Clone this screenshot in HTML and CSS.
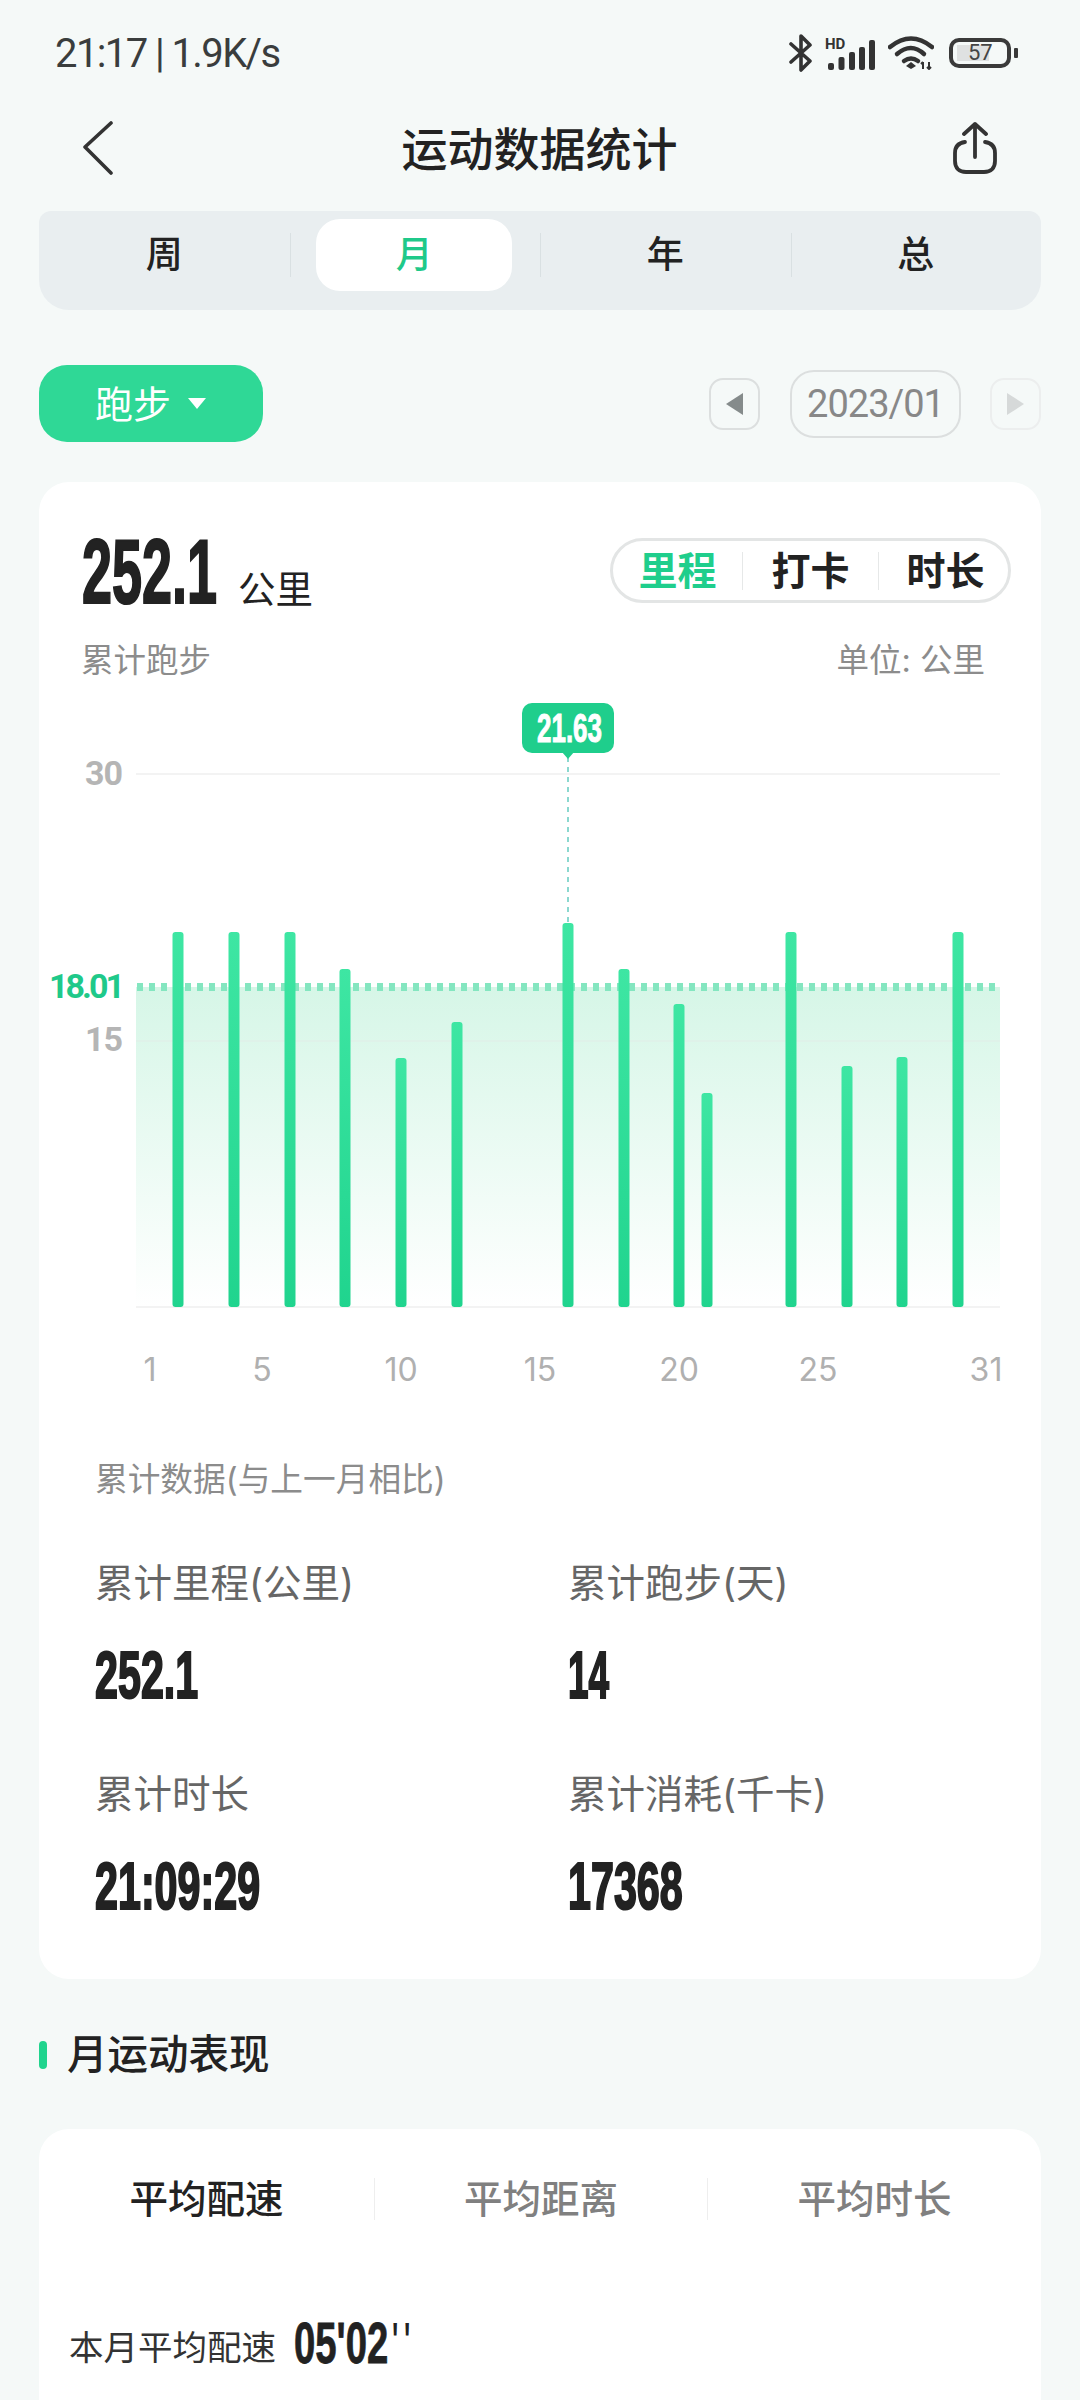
FILE: index.html
```html
<!DOCTYPE html>
<html lang="zh-CN">
<head>
  <meta charset="UTF-8">
  <meta name="viewport" content="width=device-width, initial-scale=1.0">
  <title>运动数据统计</title>
  <link rel="stylesheet" href="styles.css">
</head>
<body>
  <div class="status-bar">
    <span class="status-time">21:17 | 1.9K/s</span>
    <div class="status-icons">
      <svg class="ic-bt" viewBox="0 0 24 38"><path d="M2 10 L21 27 L12 36 V2 L21 11 L2 28"/></svg>
      <div class="ic-signal">
        <span class="hd">HD</span>
        <svg viewBox="0 0 47 30"><rect x="0" y="23" width="6" height="7" rx="2"/><rect x="10.500" y="17" width="6" height="13" rx="2"/><rect x="21" y="12" width="6" height="18" rx="2"/><rect x="31" y="7" width="6" height="23" rx="2"/><rect x="41" y="0" width="6" height="30" rx="2"/></svg>
      </div>
      <svg class="ic-wifi" viewBox="0 0 46 34">
        <path class="arc" d="M2 11 Q23 -6 44 11"/>
        <path class="arc" d="M9 18 Q23 6 36 18"/>
        <path class="arc" d="M16 25 Q23 20 30 25"/>
        <path class="solid" d="M23 26 L28 30 L23 33 L18 30 Z"/>
        <path class="thin" d="M35 33 V26 M33 28 L35 26 M41 26 V33 M39 31 L41 33 L43 31"/>
      </svg>
      <div class="battery">
        <div class="battery-body">57</div>
        <div class="battery-nub"></div>
      </div>
    </div>
  </div>

  <div class="nav-bar">
    <svg class="ic-back" viewBox="0 0 32 54"><path d="M29 2 L3 26 L29 52"/></svg>
    <h1>运动数据统计</h1>
    <svg class="ic-share" viewBox="0 0 44 52">
      <path d="M12 20 C5 21 2 25 2 31 V39 C2 46 6 50 13 50 H31 C38 50 42 46 42 39 V31 C42 25 39 21 32 20"/>
      <path d="M22 2 V35 M11 12 L22 2 L33 12"/>
    </svg>
  </div>

  <div class="period-tabs">
    <div class="period-tab"><span>周</span></div>
    <div class="period-tab active"><span>月</span></div>
    <div class="period-tab"><span>年</span></div>
    <div class="period-tab"><span>总</span></div>
  </div>

  <div class="filter-row">
    <div class="sport-btn"><span>跑步</span><i class="caret"></i></div>
    <div class="date-nav">
      <div class="date-arrow"><i class="tri-left"></i></div>
      <div class="date-label">2023/01</div>
      <div class="date-arrow disabled"><i class="tri-right"></i></div>
    </div>
  </div>

  <div class="card summary-card">
    <div class="summary-head">
      <div class="summary-total">
        <div class="total-num"><span class="num num-xl">252.1</span></div>
        <span class="total-unit">公里</span>
      </div>
      <div class="metric-switch">
        <span class="metric active">里程</span>
        <span class="metric">打卡</span>
        <span class="metric">时长</span>
      </div>
    </div>
    <div class="summary-sub">
      <span>累计跑步</span>
      <span>单位: 公里</span>
    </div>

    <svg class="chart" viewBox="40 690 1000 710">
      <defs>
        <linearGradient id="barFill" x1="0" y1="0" x2="0" y2="1">
          <stop offset="0" stop-color="#3ee6a3"/>
          <stop offset="1" stop-color="#20d48e"/>
        </linearGradient>
        <linearGradient id="areaFill" x1="0" y1="0" x2="0" y2="1">
          <stop offset="0" stop-color="#d6f6e7"/>
          <stop offset="1" stop-color="#ffffff"/>
        </linearGradient>
      </defs>

      <rect x="136" y="987" width="864" height="320" fill="url(#areaFill)"/>
      <line class="grid" x1="136" y1="774" x2="1000" y2="774"/>
      <line class="grid-mid" x1="136" y1="1041" x2="1000" y2="1041"/>
      <line class="grid" x1="136" y1="1307" x2="1000" y2="1307"/>
      <line class="avg" x1="137" y1="987" x2="1000" y2="987"/>
      <line class="pointer" x1="568" y1="757" x2="568" y2="923"/>

      <g fill="url(#barFill)">
        <rect x="172.500" y="932" width="11" height="375" rx="3"/>
        <rect x="228.500" y="932" width="11" height="375" rx="3"/>
        <rect x="284.500" y="932" width="11" height="375" rx="3"/>
        <rect x="339.500" y="969" width="11" height="338" rx="3"/>
        <rect x="395.500" y="1058" width="11" height="249" rx="3"/>
        <rect x="451.500" y="1022" width="11" height="285" rx="3"/>
        <rect x="562.500" y="923" width="11" height="384" rx="3"/>
        <rect x="618.500" y="969" width="11" height="338" rx="3"/>
        <rect x="673.500" y="1004" width="11" height="303" rx="3"/>
        <rect x="701.500" y="1093" width="11" height="214" rx="3"/>
        <rect x="785.500" y="932" width="11" height="375" rx="3"/>
        <rect x="841.500" y="1066" width="11" height="241" rx="3"/>
        <rect x="896.500" y="1057" width="11" height="250" rx="3"/>
        <rect x="952.500" y="932" width="11" height="375" rx="3"/>
      </g>

      <text class="y-label" x="122" y="785">30</text>
      <text class="y-label avg-label" x="122" y="998">18.01</text>
      <text class="y-label" x="122" y="1051">15</text>

      <text class="x-label" x="150" y="1381">1</text>
      <text class="x-label" x="262" y="1381">5</text>
      <text class="x-label" x="401" y="1381">10</text>
      <text class="x-label" x="540" y="1381">15</text>
      <text class="x-label" x="679" y="1381">20</text>
      <text class="x-label" x="818" y="1381">25</text>
      <text class="x-label" x="986" y="1381">31</text>

      <rect class="tip" x="522" y="703" width="92" height="50" rx="10"/>
      <path class="tip" d="M562 752 H574 L568 759 Z"/>
      <text class="tip-text" x="537" y="742" textLength="65" lengthAdjust="spacingAndGlyphs">21.63</text>
    </svg>

    <div class="stats-title">累计数据(与上一月相比)</div>
    <div class="stats-grid">
      <div class="stat">
        <div class="stat-label">累计里程(公里)</div>
        <div class="stat-value"><span class="num num-lg">252.1</span></div>
      </div>
      <div class="stat">
        <div class="stat-label">累计跑步(天)</div>
        <div class="stat-value"><span class="num num-lg num-tight">14</span></div>
      </div>
      <div class="stat">
        <div class="stat-label">累计时长</div>
        <div class="stat-value"><span class="num num-lg">21:09:29</span></div>
      </div>
      <div class="stat">
        <div class="stat-label">累计消耗(千卡)</div>
        <div class="stat-value"><span class="num num-lg">17368</span></div>
      </div>
    </div>
  </div>

  <div class="section-title"><i></i>月运动表现</div>

  <div class="card perf-card">
    <div class="perf-tabs">
      <div class="perf-tab active">平均配速</div>
      <div class="perf-tab">平均距离</div>
      <div class="perf-tab">平均时长</div>
    </div>
    <div class="perf-row">
      <span class="perf-label">本月平均配速</span>
      <span class="num num-md">05'02<span class="secs">''</span></span>
    </div>
  </div>
</body>
</html>
```

FILE: styles.css
```css
* {
  box-sizing: border-box;
}

html, body {
  margin: 0;
  padding: 0;
}

body {
  width: 1080px;
  height: 2400px;
  overflow: hidden;
  background: #f5f9f8;
  color: #222;
  font-family: "Inter", "Noto Sans CJK SC", "Noto Sans", sans-serif;
}

/* status bar */
.status-bar {
  height: 106px;
  padding: 0 62px 0 55px;
  display: flex;
  align-items: center;
  justify-content: space-between;
}

.status-time {
  font-family: "Roboto", sans-serif;
  font-size: 40px;
  letter-spacing: -1.600px;
  color: #3a3d3d;
}

.status-icons {
  display: flex;
  align-items: center;
}

.ic-bt {
  width: 24px;
  height: 38px;
  fill: none;
  stroke: #333;
  stroke-width: 3.600;
  stroke-linecap: round;
  stroke-linejoin: round;
}

.ic-signal {
  width: 47px;
  height: 30px;
  margin-left: 15px;
  position: relative;
  align-self: flex-end;
  margin-bottom: 2px;
}

.ic-signal svg {
  display: block;
  width: 47px;
  height: 30px;
  fill: #333;
}

.hd {
  position: absolute;
  left: -3px;
  top: -3px;
  font-family: "Roboto", sans-serif;
  font-size: 15px;
  line-height: 15px;
  font-weight: 700;
  color: #333;
}

.ic-wifi {
  width: 46px;
  height: 34px;
  margin-left: 13px;
}

.ic-wifi .arc {
  fill: none;
  stroke: #333;
  stroke-width: 4.500;
  stroke-linecap: round;
}

.ic-wifi .solid {
  fill: #333;
}

.ic-wifi .thin {
  fill: none;
  stroke: #333;
  stroke-width: 2;
}

.battery {
  display: flex;
  align-items: center;
  margin-left: 15px;
}

.battery-body {
  width: 62px;
  height: 30px;
  border: 4px solid #3a3a3a;
  border-radius: 10px;
  padding-left: 15px;
  background: linear-gradient(#dfe1e1, #dfe1e1) 4px 3px / 32px 16px no-repeat;
  font-family: "Roboto", sans-serif;
  font-size: 22px;
  line-height: 22px;
  color: #444;
}

.battery-nub {
  width: 4px;
  height: 10px;
  margin-left: 3px;
  background: #3a3a3a;
  border-radius: 1px;
}

/* title bar */
.nav-bar {
  height: 84px;
  padding: 0 83px 0 82px;
  display: flex;
  align-items: center;
  justify-content: space-between;
}

.nav-bar h1 {
  margin: 0 0 5px 12px;
  font-size: 46px;
  font-weight: 500;
  color: #222;
}

.ic-back {
  width: 32px;
  height: 54px;
  fill: none;
  stroke: #333;
  stroke-width: 3.600;
  stroke-linecap: round;
  stroke-linejoin: round;
}

.ic-share {
  width: 44px;
  height: 52px;
  fill: none;
  stroke: #333;
  stroke-width: 3.800;
  stroke-linecap: round;
  stroke-linejoin: round;
}

/* week / month / year tabs */
.period-tabs {
  height: 99px;
  margin: 21px 39px 0;
  padding-bottom: 19px;
  padding-top: 8px;
  display: grid;
  grid-template-columns: repeat(4, 1fr);
  background: #e9eef0;
  border-radius: 12px 12px 30px 30px;
}

.period-tab {
  display: flex;
  align-items: center;
  justify-content: center;
  font-size: 37px;
  font-weight: 500;
  color: #222;
  position: relative;
}

.period-tab span {
  padding-bottom: 6px;
}

.period-tab + .period-tab::before {
  content: "";
  position: absolute;
  left: 0;
  top: 14px;
  bottom: 14px;
  width: 1px;
  background: #d9e0e2;
}

.period-tab.active span {
  width: 196px;
  height: 72px;
  display: flex;
  align-items: center;
  justify-content: center;
  margin-left: -1px;
  background: #fff;
  border-radius: 24px;
  color: #1fc98a;
}

/* sport + date selector */
.filter-row {
  margin: 55px 39px 0;
  height: 77px;
  display: flex;
  align-items: center;
  justify-content: space-between;
}

.sport-btn {
  width: 224px;
  height: 77px;
  padding-left: 56px;
  display: flex;
  align-items: center;
  background: #2fd896;
  border-radius: 28px;
  color: #fff;
  font-size: 38px;
}

.sport-btn span {
  padding-bottom: 4px;
}

.caret {
  margin-left: 17px;
  border-top: 11px solid #fff;
  border-left: 9px solid transparent;
  border-right: 9px solid transparent;
}

.date-nav {
  display: flex;
  align-items: center;
}

.date-arrow {
  width: 51px;
  height: 52px;
  display: flex;
  align-items: center;
  justify-content: center;
  border: 2px solid #dcdfdf;
  border-radius: 14px;
}

.date-arrow.disabled {
  margin-left: 29px;
  border-color: #eceeee;
}

.tri-left {
  border-right: 17px solid #858b8b;
  border-top: 11px solid transparent;
  border-bottom: 11px solid transparent;
}

.tri-right {
  border-left: 17px solid #d6d9d9;
  border-top: 11px solid transparent;
  border-bottom: 11px solid transparent;
}

.date-label {
  width: 171px;
  height: 68px;
  margin-left: 30px;
  display: flex;
  align-items: center;
  justify-content: center;
  border: 2px solid #dcdfdf;
  border-radius: 24px;
  font-family: "Roboto", sans-serif;
  font-size: 38px;
  letter-spacing: -1px;
  color: #888;
}

/* cards */
.card {
  margin: 0 39px;
  background: #fff;
  border-radius: 30px;
}

.summary-card {
  margin-top: 40px;
  height: 1497px;
  padding-top: 56px;
}

.summary-head {
  height: 67px;
  padding: 0 30px 0 43px;
  display: flex;
  justify-content: space-between;
}

.summary-total {
  display: flex;
  align-items: flex-end;
}

.total-num {
  width: 156px;
  height: 67px;
  padding-top: 1px;
}

.total-unit {
  margin-bottom: -3px;
  font-size: 37.500px;
  line-height: 36px;
  color: #222;
}

/* squeezed figures: the app uses a condensed bold numeral face */
.num {
  display: inline-block;
  font-family: "Liberation Sans", sans-serif;
  font-weight: 700;
  color: #222;
  -webkit-text-stroke: 2.200px #222;
  transform-origin: 0 50%;
}

.num-xl {
  font-size: 90px;
  line-height: 67px;
  transform: scaleX(.6);
}

.num-lg {
  font-size: 66px;
  line-height: 60px;
  transform: scaleX(.625);
}

.num-tight {
  transform: scaleX(.56);
}

.num-md {
  font-size: 58px;
  line-height: 58px;
  -webkit-text-stroke: .800px #222;
  transform: scaleX(.66);
}

.secs {
  letter-spacing: 7px;
  margin-left: 5px;
  font-weight: 400;
  -webkit-text-stroke: 0;
}

.metric-switch {
  width: 401px;
  height: 65px;
  display: grid;
  grid-template-columns: 129px 136px 1fr;
  align-items: center;
  border: 3px solid #e3e5e5;
  border-radius: 33px;
  font-size: 39px;
  font-weight: 700;
  line-height: 38px;
  text-align: center;
}

.metric {
  color: #222;
}

.metric + .metric {
  border-left: 1px solid #e6e8e8;
}

.metric + .metric + .metric {
  padding-left: 4px;
}

.metric.active {
  color: #1fce8c;
}

.summary-sub {
  margin-top: 36px;
  padding: 0 56px 0 42px;
  display: flex;
  justify-content: space-between;
  font-size: 32.500px;
  line-height: 40px;
  color: #8c8c8c;
}

.chart {
  display: block;
  width: 1000px;
  height: 710px;
  margin: 9px 0 0 1px;
}

.grid {
  stroke: #efefef;
  stroke-width: 1.500;
}

.grid-mid {
  stroke: #dff0e8;
  stroke-width: 1.500;
}

.avg {
  stroke: #84e6c0;
  stroke-width: 8;
  stroke-dasharray: 6 6;
}

.pointer {
  stroke: #8bd8cf;
  stroke-width: 2;
  stroke-dasharray: 5 5;
}

.y-label {
  font-family: "Roboto", sans-serif;
  font-size: 34px;
  font-weight: 700;
  letter-spacing: -1px;
  fill: #b5b5b5;
  text-anchor: end;
}

.avg-label {
  fill: #1fc98a;
  letter-spacing: -3px;
}

.x-label {
  font-family: "Inter", sans-serif;
  font-size: 32px;
  fill: #b0b0b0;
  text-anchor: middle;
}

.tip {
  fill: #1fce8c;
}

.tip-text {
  font-family: "Liberation Sans", sans-serif;
  font-size: 40px;
  font-weight: 700;
  fill: #fff;
  stroke: #fff;
  stroke-width: 1;
}

.stats-title {
  margin-top: 59px;
  padding-left: 56px;
  font-size: 32.700px;
  line-height: 40px;
  color: #8c8c8c;
}

.stats-grid {
  margin-top: 59px;
  padding-left: 56px;
  display: grid;
  grid-template-columns: 473px 1fr;
  row-gap: 64px;
}

.stat-label {
  font-size: 38.500px;
  line-height: 50px;
  color: #666;
}

.stat-value {
  margin-top: 37px;
  height: 60px;
}

/* section heading */
.section-title {
  margin: 56px 39px 0;
  height: 40px;
  display: flex;
  align-items: center;
  font-size: 40.500px;
  line-height: 40px;
  font-weight: 500;
  color: #222;
}

.section-title i {
  width: 8px;
  height: 28px;
  margin-right: 20px;
  background: #20d48e;
  border-radius: 4px;
}

.perf-card {
  margin-top: 54px;
  height: 300px;
  padding-top: 49px;
}

.perf-tabs {
  display: grid;
  grid-template-columns: 335px 333px 1fr;
  height: 42px;
}

.perf-tab {
  text-align: center;
  font-size: 38.500px;
  line-height: 42px;
  font-weight: 500;
  color: #808080;
}

.perf-tab + .perf-tab {
  border-left: 1.500px solid #eeeeee;
}

.perf-tab.active {
  color: #222;
}

.perf-row {
  margin-top: 94px;
  padding-left: 30px;
  display: flex;
  align-items: flex-start;
}

.perf-label {
  margin: 14px 18px 0 0;
  font-size: 34.500px;
  line-height: 40px;
  color: #333;
}
```
